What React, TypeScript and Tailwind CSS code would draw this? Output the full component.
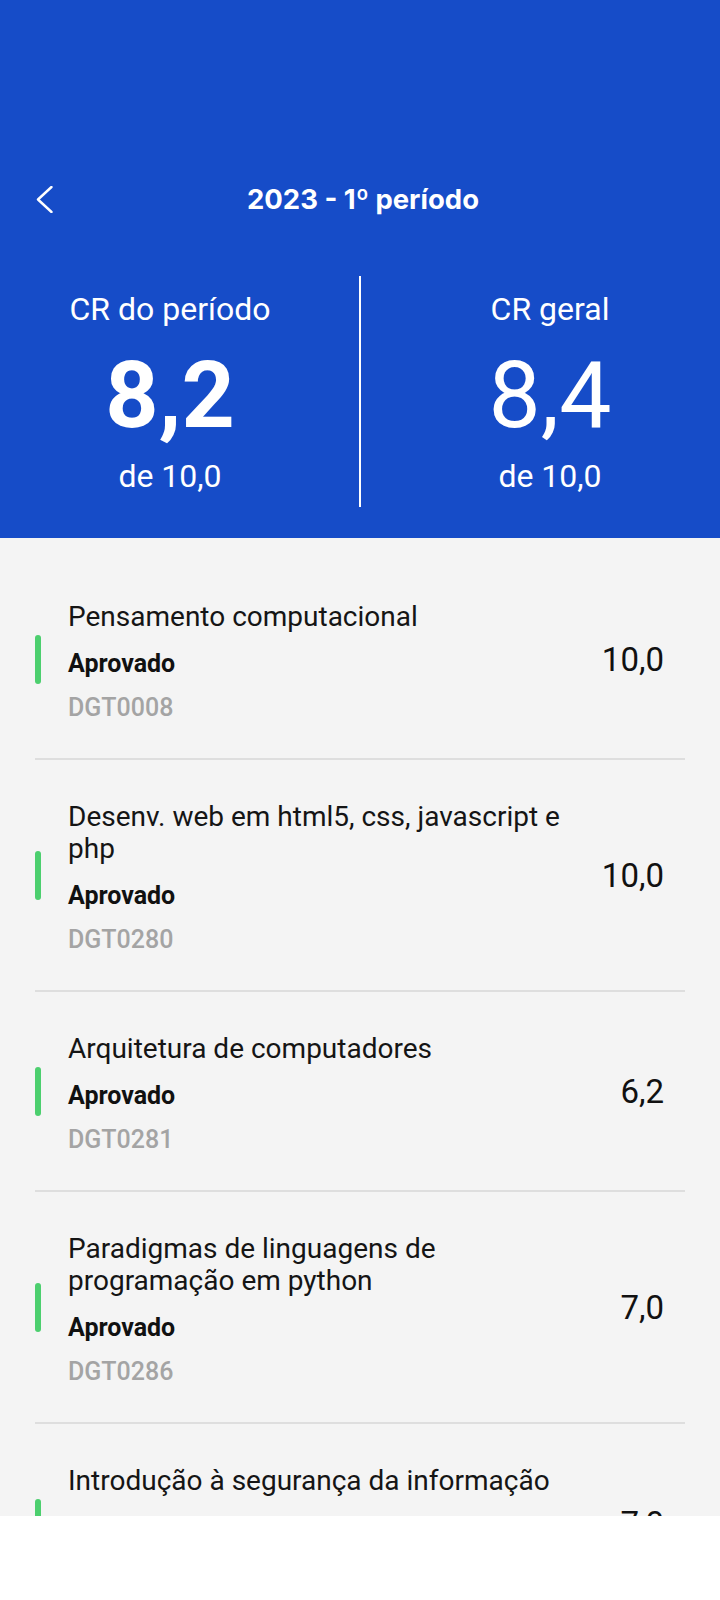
import React from "react";

type Item = { title: React.ReactNode; status: string; code: string; grade: string };

const items: Item[] = [
  { title: "Pensamento computacional", status: "Aprovado", code: "DGT0008", grade: "10,0" },
  {
    title: (
      <>
        Desenv. web em html5, css, javascript e<br />php
      </>
    ),
    status: "Aprovado",
    code: "DGT0280",
    grade: "10,0",
  },
  { title: "Arquitetura de computadores", status: "Aprovado", code: "DGT0281", grade: "6,2" },
  {
    title: (
      <>
        Paradigmas de linguagens de
        <br />
        programação em python
      </>
    ),
    status: "Aprovado",
    code: "DGT0286",
    grade: "7,0",
  },
  { title: "Introdução à segurança da informação", status: "Aprovado", code: "DGT0287", grade: "7,0" },
];

function Stat({ label, value, bold }: { label: string; value: string; bold?: boolean }) {
  return (
    <div className="flex-1 flex flex-col items-center pt-[15px] text-white">
      <div className="text-[32px] leading-[36px]">{label}</div>
      <div className={`mt-[22px] text-[93px] leading-[94px] ${bold ? "font-bold" : "font-normal"}`}>{value}</div>
      <div className="mt-[15px] text-[32px] leading-[36px]">de 10,0</div>
    </div>
  );
}

export default function App() {
  return (
    <div className="w-[720px] h-[1600px] bg-white overflow-hidden" style={{ fontFamily: "Roboto, 'Noto Sans', sans-serif" }}>
      <div className="h-[1516px] overflow-hidden bg-[#f4f4f4]">
        <header className="bg-[#164cc8] pt-[171px] pb-[31px]">
          <div className="grid grid-cols-[1fr_auto_1fr] items-center h-[56px]">
            <div className="pl-[36px] flex items-center">
              <svg width="18" height="27" viewBox="0 0 18 27" fill="none">
                <polyline points="15.5,1 2,13.5 15.5,26" stroke="white" strokeWidth="2.4" strokeLinecap="round" strokeLinejoin="round" />
              </svg>
            </div>
            <div className="text-white font-bold text-[27.5px] leading-[56px] pl-[6px]" style={{ fontFamily: "Inter, Roboto, sans-serif" }}>
              2023 - 1º período
            </div>
            <div />
          </div>
          <div className="flex mt-[49px] h-[231px]">
            <Stat label="CR do período" value="8,2" bold />
            <div className="w-[2px] bg-white mx-[19px]" />
            <Stat label="CR geral" value="8,4" />
          </div>
        </header>
        <div className="px-[35px] pt-[22px]">
          {items.map((it, i) => (
            <div key={i} className={i > 0 ? "border-t-2 border-[#dedede]" : ""}>
              <div className="flex items-center pb-[28px] pt-[41px]">
                <div className="w-[6px] h-[49px] rounded-full bg-[#4ccf6e] mb-[12px] shrink-0" />
                <div className="flex-1 min-w-0 pl-[27px]">
                  <div className="text-[28px] leading-[32px] text-[#151515]">{it.title}</div>
                  <div className="mt-[9px] text-[25px] leading-[44px] font-bold text-[#111]">{it.status}</div>
                  <div className="text-[25px] leading-[44px] font-medium text-[#a4a4a4]">{it.code}</div>
                </div>
                <div className="shrink-0 pr-[21px] mb-[12px] text-[33px] leading-[40px] text-[#111]">{it.grade}</div>
              </div>
            </div>
          ))}
        </div>
      </div>
    </div>
  );
}
